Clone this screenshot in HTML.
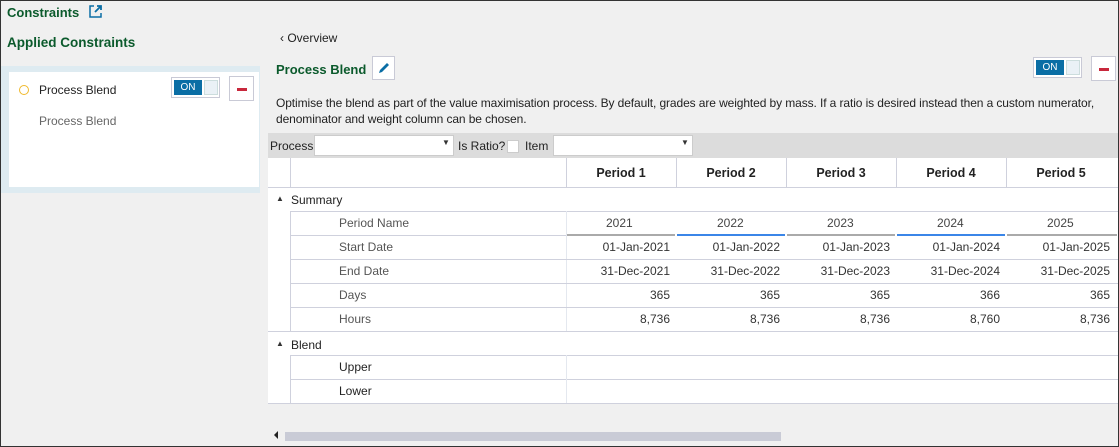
<!DOCTYPE html><html><head><style>
*{box-sizing:border-box;margin:0;padding:0}
body{width:1119px;height:447px;background:#f0f0f0;font-family:"Liberation Sans",sans-serif;font-size:12px;color:#333;position:relative;overflow:hidden}
.a{position:absolute}
.g{color:#0b5a2c;font-weight:bold}
.tog{position:absolute;width:49px;height:21px;border:1px solid #c9cad6;background:#fff}
.tog b{position:absolute;left:2px;top:2px;width:28px;height:15px;background:#0a6ea5;color:#fff;font-weight:normal;font-size:10px;text-align:center;line-height:15px}
.tog i{position:absolute;left:32px;top:2px;width:14px;height:15px;background:#eaf1f6;border:1px solid #cdd}
.del{position:absolute;width:25px;height:25px;border:1px solid #c9cad6;background:#fff}
.del:after{content:"";position:absolute;left:7px;top:11px;width:10px;height:3px;background:#c8283c}
.hl{position:absolute;height:1px;background:#cfd1dd}
.vl{position:absolute;width:1px;background:#cfd1dd}
.c{position:absolute;width:110px;text-align:right;padding-right:6px}
.h{position:absolute;width:110px;text-align:center;font-weight:bold;color:#222;font-size:12.5px}
</style></head><body>
<div class="a" style="left:0;top:0;width:1119px;height:447px;border:1px solid #333;z-index:5"></div>
<div class="a g" style="left:7px;top:5px;font-size:13px">Constraints</div>
<svg class="a" style="left:89px;top:5px" width="13" height="13" viewBox="0 0 13 13"><path d="M5 1H1v11h11V8" fill="none" stroke="#0a6ea5" stroke-width="1.5"/><path d="M6 7l6-6M8 1h4v4" fill="none" stroke="#0a6ea5" stroke-width="1.8"/></svg>
<div class="a g" style="left:7px;top:35px;font-size:13.5px">Applied Constraints</div>
<div class="a" style="left:1px;top:66px;width:259px;height:127px;background:#deebf1"></div>
<div class="a" style="left:9px;top:72px;width:250px;height:115px;background:#fff"></div>
<div class="a" style="left:19px;top:85px;width:10px;height:10px;border:1.3px solid #f0b92c;border-radius:50%"></div>
<div class="a" style="left:39px;top:83px;color:#222">Process Blend</div>
<div class="a" style="left:39px;top:114px;color:#666">Process Blend</div>
<div class="tog" style="left:171px;top:77px"><b>ON</b><i></i></div>
<div class="del" style="left:229px;top:76px"></div>

<div class="a" style="left:280px;top:31px;color:#222">‹ Overview</div>
<div class="a g" style="left:276px;top:62px;font-size:13px">Process Blend</div>
<div class="a" style="left:372px;top:56px;width:23px;height:24px;border:1px solid #c9cad6;background:#fff"></div>
<svg class="a" style="left:377px;top:61px" width="14" height="14" viewBox="0 0 14 14"><path d="M2 12l1-3 7-7 2 2-7 7z" fill="#0a6ea5"/></svg>
<div class="tog" style="left:1033px;top:57px"><b>ON</b><i></i></div>
<div class="del" style="left:1091px;top:56px"></div>
<div class="a" style="left:276px;top:95px;width:835px;line-height:16px;color:#222;letter-spacing:-0.1px">Optimise the blend as part of the value maximisation process. By default, grades are weighted by mass. If a ratio is desired instead then a custom numerator, denominator and weight column can be chosen.</div>

<div class="a" style="left:268px;top:133px;width:850px;height:25px;background:#dcdcdc"></div>
<div class="a" style="left:270px;top:139px;color:#222">Process</div>
<div class="a" style="left:314px;top:135px;width:140px;height:21px;background:#fff;border:1px solid #ccc"></div>
<div class="a" style="left:442px;top:138px;font-size:8px">▼</div>
<div class="a" style="left:458px;top:139px;color:#222">Is Ratio?</div>
<div class="a" style="left:507px;top:140px;width:12px;height:13px;background:#fff;border:1px solid #ccc"></div>
<div class="a" style="left:525px;top:139px;color:#222">Item</div>
<div class="a" style="left:553px;top:135px;width:140px;height:21px;background:#fff;border:1px solid #ccc"></div>
<div class="a" style="left:681px;top:138px;font-size:8px">▼</div>

<div class="a" style="left:268px;top:158px;width:850px;height:246px;background:#fff"></div>
<div class="hl" style="left:268px;top:187px;width:850px"></div>
<div class="vl" style="left:290px;top:158px;height:30px"></div>
<div class="vl" style="left:566px;top:158px;height:30px"></div>
<div class="vl" style="left:676px;top:158px;height:30px"></div>
<div class="vl" style="left:786px;top:158px;height:30px"></div>
<div class="vl" style="left:896px;top:158px;height:30px"></div>
<div class="vl" style="left:1006px;top:158px;height:30px"></div>
<div class="h" style="left:566px;top:166px">Period 1</div>
<div class="h" style="left:676px;top:166px">Period 2</div>
<div class="h" style="left:786px;top:166px">Period 3</div>
<div class="h" style="left:896px;top:166px">Period 4</div>
<div class="h" style="left:1006px;top:166px">Period 5</div>

<div class="a" style="left:276px;top:194px;font-size:8px">▲</div>
<div class="a" style="left:291px;top:193px;color:#222">Summary</div>
<div class="hl" style="left:290px;top:211px;width:828px"></div>
<div class="vl" style="left:290px;top:211px;height:121px"></div>
<div class="vl" style="left:566px;top:211px;height:121px;background:#e4e8ef"></div>
<div class="hl" style="left:290px;top:235px;width:276px"></div>
<div class="hl" style="left:290px;top:259px;width:828px"></div>
<div class="hl" style="left:290px;top:283px;width:828px"></div>
<div class="hl" style="left:290px;top:307px;width:828px"></div>
<div class="hl" style="left:268px;top:331px;width:850px"></div>
<div class="a" style="left:567px;top:234px;width:108px;height:2px;background:#aaa"></div>
<div class="a" style="left:677px;top:234px;width:108px;height:2px;background:#3b86e8"></div>
<div class="a" style="left:787px;top:234px;width:108px;height:2px;background:#aaa"></div>
<div class="a" style="left:897px;top:234px;width:108px;height:2px;background:#3b86e8"></div>
<div class="a" style="left:1007px;top:234px;width:110px;height:2px;background:#aaa"></div>
<div class="a" style="left:339px;top:216px;color:#555">Period Name</div>
<div class="a" style="left:339px;top:240px;color:#555">Start Date</div>
<div class="a" style="left:339px;top:264px;color:#555">End Date</div>
<div class="a" style="left:339px;top:288px;color:#555">Days</div>
<div class="a" style="left:339px;top:312px;color:#555">Hours</div>
<div class="a" style="left:606px;top:216px;color:#444">2021</div>
<div class="a" style="left:717px;top:216px;color:#444">2022</div>
<div class="a" style="left:827px;top:216px;color:#444">2023</div>
<div class="a" style="left:937px;top:216px;color:#444">2024</div>
<div class="a" style="left:1047px;top:216px;color:#444">2025</div>
<div class="c" style="left:566px;top:240px">01-Jan-2021</div><div class="c" style="left:676px;top:240px">01-Jan-2022</div><div class="c" style="left:786px;top:240px">01-Jan-2023</div><div class="c" style="left:896px;top:240px">01-Jan-2024</div><div class="c" style="left:1006px;top:240px">01-Jan-2025</div>
<div class="c" style="left:566px;top:264px">31-Dec-2021</div><div class="c" style="left:676px;top:264px">31-Dec-2022</div><div class="c" style="left:786px;top:264px">31-Dec-2023</div><div class="c" style="left:896px;top:264px">31-Dec-2024</div><div class="c" style="left:1006px;top:264px">31-Dec-2025</div>
<div class="c" style="left:566px;top:288px">365</div><div class="c" style="left:676px;top:288px">365</div><div class="c" style="left:786px;top:288px">365</div><div class="c" style="left:896px;top:288px">366</div><div class="c" style="left:1006px;top:288px">365</div>
<div class="c" style="left:566px;top:312px">8,736</div><div class="c" style="left:676px;top:312px">8,736</div><div class="c" style="left:786px;top:312px">8,736</div><div class="c" style="left:896px;top:312px">8,760</div><div class="c" style="left:1006px;top:312px">8,736</div>

<div class="a" style="left:276px;top:339px;font-size:8px">▲</div>
<div class="a" style="left:291px;top:338px;color:#222">Blend</div>
<div class="hl" style="left:290px;top:355px;width:828px"></div>
<div class="hl" style="left:290px;top:379px;width:828px"></div>
<div class="hl" style="left:268px;top:403px;width:850px"></div>
<div class="vl" style="left:290px;top:355px;height:48px"></div>
<div class="vl" style="left:566px;top:355px;height:48px;background:#e4e8ef"></div>
<div class="a" style="left:339px;top:360px;color:#222">Upper</div>
<div class="a" style="left:339px;top:384px;color:#222">Lower</div>

<div class="a" style="left:274px;top:431px;width:0;height:0;border-top:4px solid transparent;border-bottom:4px solid transparent;border-right:4px solid #222"></div>
<div class="a" style="left:285px;top:432px;width:496px;height:9px;background:#c9cbd6"></div>
</body></html>
